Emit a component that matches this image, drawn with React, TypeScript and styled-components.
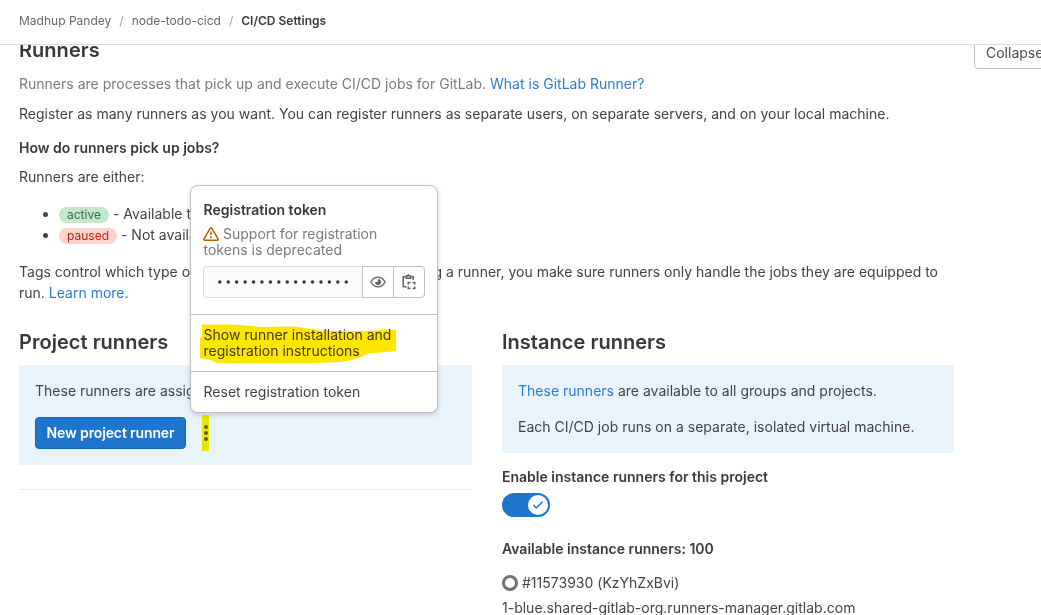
import React from "react";
import styled, { createGlobalStyle } from "styled-components";

const GlobalStyle = createGlobalStyle`
  * { box-sizing: border-box; }
  html, body { margin: 0; overflow: hidden; background: #fff; }
  body {
    font-family: Inter, "Noto Sans", sans-serif;
    font-size: 14px;
    line-height: 20px;
    letter-spacing: 0.007px;
    color: #434248;
  }
  p, h2, h3, ul { margin: 0; padding: 0; }
`;

const Page = styled.div`
  position: relative;
  width: 1041px;
  height: 615px;
  overflow: hidden;
  display: flex;
  flex-direction: column;
`;

const TopBar = styled.header`
  flex: none;
  height: 45px;
  padding: 0 19px 3px;
  display: flex;
  align-items: center;
  gap: 8px;
  border-bottom: 1px solid #dcdcde;
  font-size: 12px;
  line-height: 16px;
  color: #68676d;
`;

const Separator = styled.span`
  color: #a4a3a8;
`;

const CurrentCrumb = styled.span`
  font-weight: 600;
  color: #38373d;
`;

const Content = styled.main`
  flex: 1;
  min-height: 0;
  padding-left: 19px;
  overflow: hidden;
`;

const SectionHeader = styled.div`
  display: flex;
  justify-content: space-between;
  align-items: flex-start;
  margin-top: -9px;
  height: 28px;
`;

const Title = styled.h2`
  font-size: 20px;
  line-height: 28px;
  font-weight: 600;
  letter-spacing: 0.03px;
  color: #38373d;
  white-space: nowrap;
`;

const CollapseButton = styled.button`
  flex: none;
  width: 84px;
  height: 32px;
  margin: 1px -17px 0 0;
  padding: 0 11px;
  border: 1px solid #bfbfc3;
  border-radius: 4px;
  background: #fff;
  font: inherit;
  color: #4c4b51;
  text-align: left;
`;

const Text = styled.p<{ $top?: number; $bold?: boolean; $muted?: boolean }>`
  margin-top: ${(p) => p.$top ?? 0}px;
  font-weight: ${(p) => (p.$bold ? 600 : 400)};
  color: ${(p) => (p.$muted ? "#7b7a80" : p.$bold ? "#3a393f" : "#434248")};
  white-space: nowrap;
`;

const Tags = styled(Text)`
  line-height: 21px;
`;

const Link = styled.a`
  color: #2a7dd0;
`;

const StateList = styled.ul`
  margin-top: 16px;
  padding-left: 40px;
  line-height: 21px;
`;

const Badge = styled.span<{ $tone: "success" | "danger" }>`
  display: inline-block;
  height: 16px;
  padding: 0 8px;
  border-radius: 8px;
  font-size: 12px;
  line-height: 16px;
  background: ${(p) => (p.$tone === "success" ? "#c3e6cd" : "#fdd4cd")};
  color: ${(p) => (p.$tone === "success" ? "#2f7048" : "#b8220c")};
`;

const Columns = styled.div`
  margin-top: 25px;
  display: grid;
  grid-template-columns: 453px 452px;
  gap: 30px;
`;

const Panel = styled.div`
  margin-top: 9px;
  padding: 16px;
  background: #e9f3fc;
`;

const Actions = styled.div`
  margin-top: 16px;
  display: flex;
  align-items: center;
  gap: 16px;
`;

const PrimaryButton = styled.button`
  width: 151px;
  height: 32px;
  padding: 0;
  border: 1px solid #1068bf;
  border-radius: 4px;
  background: #1f75cb;
  color: #fff;
  font: inherit;
  font-weight: 600;
  letter-spacing: -0.13px;
  white-space: nowrap;
`;

const MoreButton = styled.svg`
  display: block;
`;

const Rule = styled.div`
  margin-top: 24px;
  height: 1px;
  background: #ececef;
`;

const Toggle = styled.div`
  margin-top: 6px;
  width: 48px;
  height: 24px;
  padding: 2px;
  display: flex;
  justify-content: flex-end;
  border-radius: 12px;
  background: #1f75cb;
`;

const Knob = styled.span`
  width: 20px;
  height: 20px;
  display: grid;
  place-items: center;
  border-radius: 50%;
  background: #fff;
`;

const Runner = styled.div`
  margin-top: 14px;
  display: flex;
  align-items: center;
  gap: 4px;
`;

const StatusRing = styled.span`
  width: 16px;
  height: 16px;
  border: 3px solid #737278;
  border-radius: 50%;
`;

const Popover = styled.div`
  position: absolute;
  left: 190px;
  top: 185px;
  width: 248px;
  height: 228px;
  border: 1px solid #bfbfc3;
  border-radius: 8px;
  background: #fff;
  box-shadow: 0 2px 5px rgba(31, 30, 36, 0.18);
  line-height: 16px;
`;

const TokenSection = styled.div`
  height: 129px;
  padding: 16px 12px 0;
  border-bottom: 1px solid #bfbfc3;
`;

const PopoverTitle = styled.div`
  padding-left: 0.5px;
  font-weight: 600;
  color: #38373d;
`;

const Deprecation = styled.div`
  margin-top: 8px;
  padding-left: 0.5px;
  color: #7b7a80;
  white-space: nowrap;
`;

const WarningIcon = styled.svg`
  width: 16px;
  height: 16px;
  margin-right: 4px;
  margin-left: -0.5px;
  vertical-align: top;
`;

const TokenGroup = styled.div`
  margin-top: 8px;
  width: 222px;
  display: flex;
`;

const TokenField = styled.div`
  width: 160px;
  height: 32px;
  display: flex;
  align-items: center;
  padding-left: 14px;
  border: 1px solid #dcdcde;
  border-right: 0;
  border-radius: 4px 0 0 4px;
  background: #fbfafd;
`;

const IconButton = styled.button<{ $last?: boolean }>`
  width: 32px;
  height: 32px;
  margin-left: -1px;
  padding: 0;
  display: grid;
  place-items: center;
  border: 1px solid #bfbfc3;
  border-radius: ${(p) => (p.$last ? "0 4px 4px 0" : "0")};
  background: #fff;
`;

const MenuItem = styled.div<{ $divided?: boolean }>`
  padding: 12px 12px 12px 12.5px;
  color: #434248;
  white-space: nowrap;
  border-bottom: ${(p) => (p.$divided ? "1px solid #bfbfc3" : "0")};
`;

const Marker = styled.svg`
  position: absolute;
  left: 198px;
  top: 322px;
  mix-blend-mode: multiply;
`;

const DotMarker = styled.div`
  position: absolute;
  left: 202px;
  top: 415px;
  width: 6.5px;
  height: 36px;
  background: #fff200;
  mix-blend-mode: multiply;
`;

export default function App() {
  return (
    <>
      <GlobalStyle />
      <Page>
        <TopBar>
          <span>Madhup Pandey</span>
          <Separator>/</Separator>
          <span>node-todo-cicd</span>
          <Separator>/</Separator>
          <CurrentCrumb>CI/CD Settings</CurrentCrumb>
        </TopBar>
        <Content>
          <SectionHeader>
            <Title>Runners</Title>
            <CollapseButton>Collapse</CollapseButton>
          </SectionHeader>
          <Text $top={10} $muted>
            Runners are processes that pick up and execute CI/CD jobs for GitLab. <Link>What is GitLab Runner?</Link>
          </Text>
          <Text $top={10}>
            Register as many runners as you want. You can register runners as separate users, on separate servers, and on your local machine.
          </Text>
          <Text $top={14} $bold>How do runners pick up jobs?</Text>
          <Text $top={9}>Runners are either:</Text>
          <StateList>
            <li><Badge $tone="success">active</Badge> - Available to run jobs.</li>
            <li><Badge $tone="danger">paused</Badge> - Not available to run jobs.</li>
          </StateList>
          <Tags $top={16}>
            Tags control which type of jobs a runner can handle. By tagging a runner, you make sure runners only handle the jobs they are equipped to
            <br />
            run. <Link>Learn more.</Link>
          </Tags>
          <Columns>
            <section>
              <Title as="h3">Project runners</Title>
              <Panel>
                <Text>These runners are assigned to this project.</Text>
                <Actions>
                  <PrimaryButton>New project runner</PrimaryButton>
                  <MoreButton width="8" height="16" viewBox="0 0 8 16" fill="#626168">
                    <circle cx="4" cy="2" r="2" />
                    <circle cx="4" cy="8" r="2" />
                    <circle cx="4" cy="14" r="2" />
                  </MoreButton>
                </Actions>
              </Panel>
              <Rule />
            </section>
            <section>
              <Title as="h3">Instance runners</Title>
              <Panel>
                <Text><Link>These runners</Link> are available to all groups and projects.</Text>
                <Text $top={16}>Each CI/CD job runs on a separate, isolated virtual machine.</Text>
              </Panel>
              <Text $top={14} $bold>Enable instance runners for this project</Text>
              <Toggle>
                <Knob>
                  <svg width="12" height="12" viewBox="0 0 12 12" fill="none" stroke="#1f75cb" strokeWidth="1.4" strokeLinecap="round">
                    <path d="M1.7 6.300 4.300 8.900 10.200 3" />
                  </svg>
                </Knob>
              </Toggle>
              <Text $top={22} $bold>Available instance runners: 100</Text>
              <Runner>
                <StatusRing />
                <span>#11573930 (KzYhZxBvi)</span>
              </Runner>
              <Text $top={5}>1-blue.shared-gitlab-org.runners-manager.gitlab.com</Text>
            </section>
          </Columns>
        </Content>

        <Popover>
          <TokenSection>
            <PopoverTitle>Registration token</PopoverTitle>
            <Deprecation>
              <WarningIcon viewBox="0 0 16 16" fill="none" stroke="#ab6100" strokeWidth="1.5" strokeLinejoin="round">
                <path d="M7.3 2.1 1 12.9Q.6 14.2 1.8 14.2H14.2Q15.4 14.2 15 12.9L8.7 2.1Q8 1.2 7.3 2.1Z" />
                <path d="M8 5.5V9" />
                <circle cx="8" cy="11.2" r="1" fill="#ab6100" stroke="none" />
              </WarningIcon>
              Support for registration
              <br />
              tokens is deprecated
            </Deprecation>
            <TokenGroup>
              <TokenField>
                <svg width="134" height="6" viewBox="0 0 134 6" fill="#333238">
                  {Array.from({ length: 16 }, (_, i) => (
                    <circle key={i} cx={1.8 + i * 8.43} cy="3" r="1.7" />
                  ))}
                </svg>
              </TokenField>
              <IconButton>
                <svg width="16" height="16" viewBox="0 0 16 16" fill="none" stroke="#737278" strokeWidth="1.5">
                  <path d="M.9 8C2.5 4.900 5 3.200 8 3.200S13.500 4.900 15.100 8C13.500 11.100 11 12.800 8 12.800S2.500 11.100.9 8Z" />
                  <path d="M8 5a3 3 0 1 1-3 3c.8.4 2 .1 2.600-.5C8.200 6.900 8.400 5.800 8 5Z" fill="#626168" stroke="none" />
                </svg>
              </IconButton>
              <IconButton $last>
                <svg width="16" height="16" viewBox="0.500 0 16 16" fill="none" stroke="#626168" strokeWidth="1.5">
                  <path d="M6 12.750H2.750V2.750H5M11 2.750h1.750V6" />
                  <path d="M5.750 4.250V2h1L7.750 .9 8.750 2h1.500V4.250Z" />
                  <path d="M7.750 10.500V8.500H9.900M12.100 8.500h2.150V10.500M14.250 12.500v2H12.100M9.900 14.500H7.750V12.500" />
                </svg>
              </IconButton>
            </TokenGroup>
          </TokenSection>
          <MenuItem $divided>
            Show runner installation and
            <br />
            registration instructions
          </MenuItem>
          <MenuItem>Reset registration token</MenuItem>
        </Popover>
        <Marker width="200" height="44" viewBox="198 322 200 44" fill="#ffe600">
          <path d="M202 324.500L230 324.500Q246 325 260 327L292 326.500Q308 328 320 330.500L350 331.500L375 330.500L385 329.500L396 330V351L375 353Q367 353 361 357Q350 361 340 362L305 363.500H260L218 363L212 360.500L200 358V338L202 337Z" />
        </Marker>
        <DotMarker />
      </Page>
    </>
  );
}
